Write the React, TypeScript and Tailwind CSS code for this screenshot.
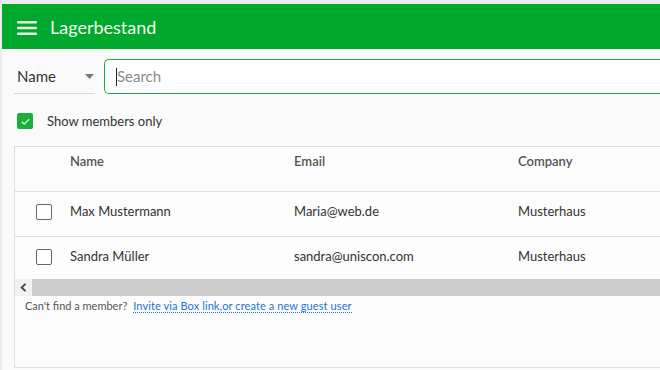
import React from 'react';

const rows = [
  { name: 'Max Mustermann', email: 'Maria@web.de', company: 'Musterhaus' },
  { name: 'Sandra Müller', email: 'sandra@uniscon.com', company: 'Musterhaus' },
];

function Checkbox({ checked }: { checked?: boolean }) {
  if (checked) {
    return (
      <span className="flex h-4 w-4 items-center justify-center rounded-[2px] bg-[#1aae3a]">
        <svg width="11" height="11" viewBox="0 0 12 12" fill="none">
          <path d="M2 6.3l2.6 2.6L10 3.4" stroke="#e9f7ea" strokeWidth="1.4" />
        </svg>
      </span>
    );
  }
  return <span className="block h-4 w-4 rounded-[2px] border border-[#666] bg-white" />;
}

export default function App() {
  return (
    <div
      className="h-[370px] w-[660px] overflow-hidden bg-[#ececec] pl-[2px] pt-[4px]"
      style={{ fontFamily: 'Lato, "Open Sans", sans-serif' }}
    >
      <div className="flex h-full flex-col bg-[#fafafa]">
        {/* header */}
        <header className="flex h-[45px] shrink-0 items-center bg-[#00a82d] pl-[15px]">
          <svg width="20" height="14" viewBox="0 0 20 14" className="mt-[2px]">
            <rect x="0" y="0" width="20" height="2.6" rx="1" fill="#eef7e4" />
            <rect x="0" y="5.7" width="20" height="2.6" rx="1" fill="#eef7e4" />
            <rect x="0" y="11.4" width="20" height="2.6" rx="1" fill="#eef7e4" />
          </svg>
          <h1 className="ml-[13px] text-[18px] leading-none text-[#f3faef]">Lagerbestand</h1>
        </header>

        {/* search row */}
        <div className="mt-[10px] flex h-[35px] items-stretch pl-[12px]">
          <div className="flex w-[81px] items-center justify-between border-b border-[#d6d6d6] pl-[3px] pr-[1px]">
            <span className="text-[15px] text-[#333]">Name</span>
            <svg width="9" height="5" viewBox="0 0 9 5">
              <path d="M0 0h9L4.5 5z" fill="#777" />
            </svg>
          </div>
          <div className="ml-[9px] flex flex-1 items-center rounded-l-[5px] border-y-[1.5px] border-l-[1.5px] border-[#1aae3a] bg-white pl-[11px]">
            <span className="h-[18px] w-px bg-[#222]" />
            <span className="text-[15px] text-[#8a8a8a]">Search</span>
          </div>
        </div>

        {/* members only */}
        <div className="mt-[19px] flex h-4 items-center pl-[15px]">
          <Checkbox checked />
          <span className="ml-[14px] text-[13px] leading-4 text-[#333]">Show members only</span>
        </div>

        {/* table */}
        <div className="ml-[12px] mt-[17px] flex flex-1 flex-col border-l border-t border-b border-[#dedede] bg-[#fcfcfc]">
          <div className="flex h-[45px] items-start border-b border-[#dedede] pt-[5px] text-[13px] font-semibold text-[#555]">
            <span className="w-[279px] pl-[55px]">Name</span>
            <span className="w-[224px]">Email</span>
            <span>Company</span>
          </div>
          {rows.map((r) => (
            <div key={r.name} className="flex h-[45px] items-center border-b border-[#dedede] pb-[4px] text-[13px] text-[#333] last:border-b-0">
              <span className="flex w-[279px] items-center pl-[21px]">
                <Checkbox />
                <span className="ml-[18px]">{r.name}</span>
              </span>
              <span className="w-[224px]">{r.email}</span>
              <span>{r.company}</span>
            </div>
          ))}
          <div className="mt-[-3px] flex h-[17px] bg-[#cdcdcd]">
            <span className="flex w-[17px] items-center justify-center bg-[#f1f1f1]">
              <svg width="7" height="9" viewBox="0 0 7 9">
                <path d="M5.5 0.8L1.6 4.5l3.9 3.7" stroke="#444" strokeWidth="1.8" fill="none" />
              </svg>
            </span>
          </div>
          <p className="mt-[2px] pl-[10px] text-[11px] text-[#555]">
            Can't find a member?{' '}
            <a className="ml-[3px] cursor-pointer border-b border-dotted border-[#1a73d9] tracking-[0.1px] text-[#1a73d9]">
              Invite via Box link,or create a new guest user
            </a>
          </p>
        </div>
        <div className="h-[2px]" />
      </div>
    </div>
  );
}
